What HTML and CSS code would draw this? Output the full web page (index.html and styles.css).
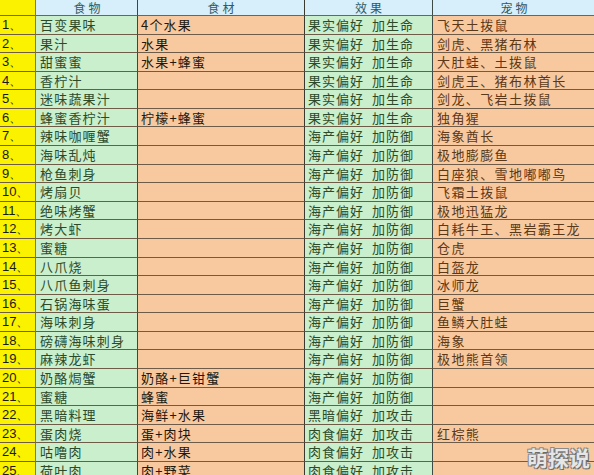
FILE: index.html
```html
<!DOCTYPE html>
<html lang="zh">
<head>
<meta charset="utf-8">
<link rel="stylesheet" href="styles.css">
</head>
<body>
<div class="sheet">
  <div class="row head"><div class="c a"></div><div class="c b">食物</div><div class="c cc">食材</div><div class="c d">效果</div><div class="c e">宠物</div></div>
  <div class="row"><div class="c a">1、</div><div class="c b">百变果味</div><div class="c cc">4个水果</div><div class="c d">果实偏好 加生命</div><div class="c e">飞天土拨鼠</div></div>
  <div class="row"><div class="c a">2、</div><div class="c b">果汁</div><div class="c cc">水果</div><div class="c d">果实偏好 加生命</div><div class="c e">剑虎、黑猪布林</div></div>
  <div class="row"><div class="c a">3、</div><div class="c b">甜蜜蜜</div><div class="c cc">水果+蜂蜜</div><div class="c d">果实偏好 加生命</div><div class="c e">大肚蛙、土拨鼠</div></div>
  <div class="row"><div class="c a">4、</div><div class="c b">香柠汁</div><div class="c cc"></div><div class="c d">果实偏好 加生命</div><div class="c e">剑虎王、猪布林首长</div></div>
  <div class="row"><div class="c a">5、</div><div class="c b">迷味蔬果汁</div><div class="c cc"></div><div class="c d">果实偏好 加生命</div><div class="c e">剑龙、飞岩土拨鼠</div></div>
  <div class="row"><div class="c a">6、</div><div class="c b">蜂蜜香柠汁</div><div class="c cc">柠檬+蜂蜜</div><div class="c d">果实偏好 加生命</div><div class="c e">独角猩</div></div>
  <div class="row"><div class="c a">7、</div><div class="c b">辣味咖喱蟹</div><div class="c cc"></div><div class="c d">海产偏好 加防御</div><div class="c e">海象酋长</div></div>
  <div class="row"><div class="c a">8、</div><div class="c b">海味乱炖</div><div class="c cc"></div><div class="c d">海产偏好 加防御</div><div class="c e">极地膨膨鱼</div></div>
  <div class="row"><div class="c a">9、</div><div class="c b">枪鱼刺身</div><div class="c cc"></div><div class="c d">海产偏好 加防御</div><div class="c e">白座狼、雪地嘟嘟鸟</div></div>
  <div class="row"><div class="c a">10、</div><div class="c b">烤扇贝</div><div class="c cc"></div><div class="c d">海产偏好 加防御</div><div class="c e">飞霜土拨鼠</div></div>
  <div class="row"><div class="c a">11、</div><div class="c b">绝味烤蟹</div><div class="c cc"></div><div class="c d">海产偏好 加防御</div><div class="c e">极地迅猛龙</div></div>
  <div class="row"><div class="c a">12、</div><div class="c b">烤大虾</div><div class="c cc"></div><div class="c d">海产偏好 加防御</div><div class="c e">白耗牛王、黑岩霸王龙</div></div>
  <div class="row"><div class="c a">13、</div><div class="c b">蜜糖</div><div class="c cc"></div><div class="c d">海产偏好 加防御</div><div class="c e">仓虎</div></div>
  <div class="row"><div class="c a">14、</div><div class="c b">八爪烧</div><div class="c cc"></div><div class="c d">海产偏好 加防御</div><div class="c e">白盔龙</div></div>
  <div class="row"><div class="c a">15、</div><div class="c b">八爪鱼刺身</div><div class="c cc"></div><div class="c d">海产偏好 加防御</div><div class="c e">冰师龙</div></div>
  <div class="row"><div class="c a">16、</div><div class="c b">石锅海味蛋</div><div class="c cc"></div><div class="c d">海产偏好 加防御</div><div class="c e">巨蟹</div></div>
  <div class="row"><div class="c a">17、</div><div class="c b">海味刺身</div><div class="c cc"></div><div class="c d">海产偏好 加防御</div><div class="c e">鱼鳞大肚蛙</div></div>
  <div class="row"><div class="c a">18、</div><div class="c b">磅礴海味刺身</div><div class="c cc"></div><div class="c d">海产偏好 加防御</div><div class="c e">海象</div></div>
  <div class="row"><div class="c a">19、</div><div class="c b">麻辣龙虾</div><div class="c cc"></div><div class="c d">海产偏好 加防御</div><div class="c e">极地熊首领</div></div>
  <div class="row"><div class="c a">20、</div><div class="c b">奶酪焗蟹</div><div class="c cc">奶酪+巨钳蟹</div><div class="c d">海产偏好 加防御</div><div class="c e"></div></div>
  <div class="row"><div class="c a">21、</div><div class="c b">蜜糖</div><div class="c cc">蜂蜜</div><div class="c d">海产偏好 加防御</div><div class="c e"></div></div>
  <div class="row"><div class="c a">22、</div><div class="c b">黑暗料理</div><div class="c cc">海鲜+水果</div><div class="c d">黑暗偏好 加攻击</div><div class="c e"></div></div>
  <div class="row"><div class="c a">23、</div><div class="c b">蛋肉烧</div><div class="c cc">蛋+肉块</div><div class="c d">肉食偏好 加攻击</div><div class="c e">红棕熊</div></div>
  <div class="row"><div class="c a">24、</div><div class="c b">咕噜肉</div><div class="c cc">肉+水果</div><div class="c d">肉食偏好 加攻击</div><div class="c e"></div></div>
  <div class="row"><div class="c a">25、</div><div class="c b">荷叶肉</div><div class="c cc">肉+野菜</div><div class="c d">肉食偏好 加攻击</div><div class="c e"></div></div>
  <div class="mark">萌探说</div>
</div>
</body>
</html>
```
FILE: styles.css
```css
html, body {
  margin: 0;
  padding: 0;
  background: #f8c99e;
}
.sheet {
  position: relative;
  width: 594px;
  height: 475px;
  overflow: hidden;
  font-family: "Noto Sans CJK SC", "Noto Sans", sans-serif;
}
.row {
  display: grid;
  grid-template-columns: 36px 102px 167px 128px 161px;
  height: 18.58px;
}
.row.head {
  height: 16px;
}
.c {
  box-sizing: border-box;
  border-right: 1px solid #5e5a50;
  border-bottom: 1px solid #6e5c48;
  font-size: 13px;
  line-height: 17px;
  white-space: nowrap;
  letter-spacing: 1.2px;
}
.head .c {
  font-size: 12px;
  line-height: 15px;
  text-align: center;
  background: #d6effa;
  color: #2e5a66;
  border-bottom-color: #5d6a6a;
  letter-spacing: 3px;
}
.a {
  background: #fbf200;
  color: #1a1a10;
  font-family: "Liberation Sans", Arial, sans-serif;
  padding-left: 2px;
  letter-spacing: 0;
  border-right-color: #7d7a50;
}
.head .a {
  background: #fbf200;
}
.b {
  background: #c9efcc;
  color: #2c4a2a;
  padding-left: 4px;
  border-right-color: #3a4a3a;
}
.cc {
  background: #f8c99e;
  color: #1d1810;
  padding-left: 3px;
  border-right-color: #3a3a30;
}
.d {
  background: #c9efcc;
  color: #2c4a2a;
  padding-left: 3px;
  letter-spacing: 1px;
  word-spacing: 4px;
  border-right-color: #3e4a46;
}
.e {
  background: #f8c99e;
  color: #5a3818;
  padding-left: 4px;
  letter-spacing: 1.4px;
  border-right: none;
}
.mark {
  position: absolute;
  right: 4px;
  bottom: 7px;
  font-size: 21px;
  line-height: 22px;
  font-weight: 700;
  color: #e6e6e6;
  letter-spacing: 0;
  text-shadow: 1px 1px 0 #6a6a6a, -1px -1px 0 #8a8a8a, 1px -1px 0 #8a8a8a, -1px 1px 0 #8a8a8a;
}
```
